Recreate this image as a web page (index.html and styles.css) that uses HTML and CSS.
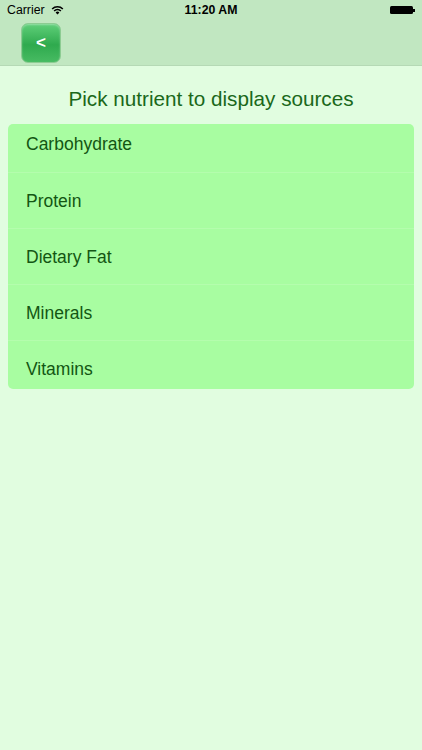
FILE: index.html
```html
<!DOCTYPE html>
<html lang="en">

<head>
      <meta charset="UTF-8">
      <meta name="viewport" content="width=device-width, initial-scale=1.0">
      <title>Nutrient sources</title>
      <link rel="stylesheet" href="styles.css">
</head>

<body>
      <!-- Thanh trạng thái + thanh điều hướng -->
      <div class="top-bar">
            <div class="status-bar">
                  <div class="status-left">
                        <span>Carrier</span>
                        <svg class="wifi" width="13" height="10" viewBox="0 0 13 10">
                              <path d="M0.6 3.4 A8.5 8.5 0 0 1 12.4 3.4 L11.3 4.5 A7 7 0 0 0 1.7 4.5 Z" fill="#000"/>
                              <path d="M2.6 5.4 A5.6 5.6 0 0 1 10.4 5.4 L9.3 6.5 A4.1 4.1 0 0 0 3.7 6.5 Z" fill="#000"/>
                              <path d="M4.6 7.4 A2.7 2.7 0 0 1 8.4 7.4 L6.5 9.4 Z" fill="#000"/>
                        </svg>
                  </div>
                  <div class="status-time">11:20 AM</div>
                  <div class="status-right">
                        <div class="battery"></div>
                        <div class="battery-tip"></div>
                  </div>
            </div>
            <div class="nav-bar">
                  <button class="back-button">&lt;</button>
            </div>
      </div>

      <h1 class="title">Pick nutrient to display sources</h1>

      <div class="list">
            <div class="row">Carbohydrate</div>
            <div class="row">Protein</div>
            <div class="row">Dietary Fat</div>
            <div class="row">Minerals</div>
            <div class="row">Vitamins</div>
      </div>
</body>

</html>
```

FILE: styles.css
```css
/* Toàn trang */
body {
      margin: 0;
      height: 750px;
      background-color: #e1fde0;
      font-family: "Liberation Sans", Arial, sans-serif;
}

/* Phần trên cùng */
.top-bar {
      background-color: #c1e7c1;
      border-bottom: 1px solid #b5d9b5;
      height: 65px;
}

.status-bar {
      height: 20px;
      display: flex;
      align-items: center;
      justify-content: space-between;
      padding: 0 6px 0 7px;
      font-size: 12.3px;
      color: #000;
}

.status-left {
      display: flex;
      align-items: center;
      gap: 6px;
      width: 100px;
}

.status-time {
      font-weight: bold;
      font-size: 12.3px;
}

.status-right {
      width: 100px;
      display: flex;
      justify-content: flex-end;
      align-items: center;
      padding-right: 1px;
}

.battery {
      width: 23px;
      height: 8px;
      background-color: #000;
      border-radius: 1.5px;
}

.battery-tip {
      width: 1.5px;
      height: 3px;
      background-color: #000;
}

.nav-bar {
      height: 45px;
      display: flex;
      align-items: flex-start;
      padding-left: 21px;
      padding-top: 3px;
}

.back-button {
      width: 40px;
      height: 40px;
      border: 1px solid #8ccc92;
      border-radius: 7px;
      background: linear-gradient(#5fcf79, #2faa4e 55%, #47bb62);
      color: #fff;
      font-family: "Liberation Sans", Arial, sans-serif;
      font-weight: bold;
      font-size: 17px;
      padding: 0;
      box-shadow: inset 0 1px 2px rgba(255, 255, 255, 0.35);
}

/* Tiêu đề */
.title {
      margin: 0;
      padding-top: 21px;
      height: 37px;
      text-align: center;
      font-weight: normal;
      font-size: 20.7px;
      color: #1a681a;
}

/* Danh sách */
.list {
      margin: 0 8px;
      background-color: #a8fda1;
      border-radius: 5px;
      overflow: hidden;
}

.row {
      height: 56px;
      line-height: 57px;
      padding-left: 18px;
      font-size: 17.5px;
      color: #135613;
      border-top: 1px solid #b4fdad;
      box-sizing: border-box;
}

.row:first-child {
      margin-top: -8px;
      border-top: none;
}

.row:last-child {
      margin-bottom: -7px;
}
```
